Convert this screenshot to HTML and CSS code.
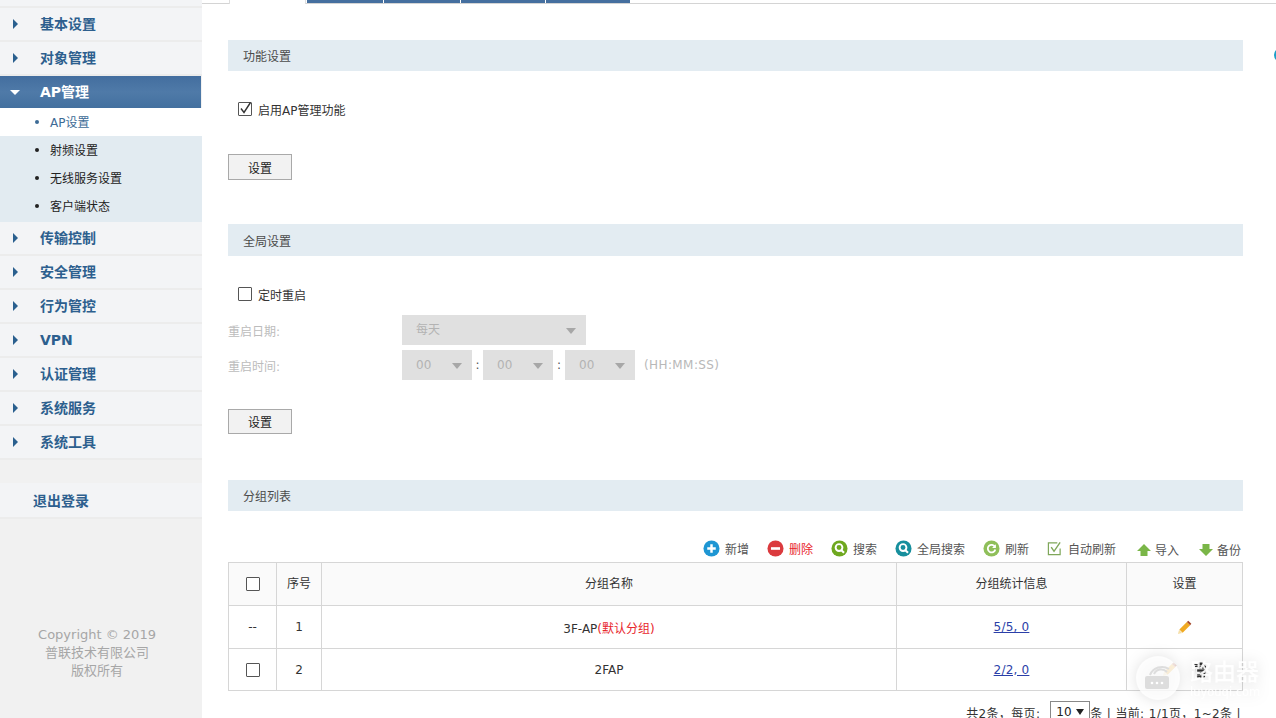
FILE: index.html
```html
<!DOCTYPE html>
<html lang="zh">
<head>
<meta charset="utf-8">
<title>AP设置</title>
<link rel="stylesheet" href="styles.css">
</head>
<body>
<div class="page">
  <aside class="sidebar">
    <nav class="menu">
      <div class="menu-stub"></div>
      <a class="menu-item"><i class="arrow"></i><span>基本设置</span></a>
      <a class="menu-item"><i class="arrow"></i><span>对象管理</span></a>
      <a class="menu-item open"><i class="arrow-down"></i><span>AP管理</span></a>
      <ul class="submenu">
        <li class="current">AP设置</li>
        <li>射频设置</li>
        <li>无线服务设置</li>
        <li class="last">客户端状态</li>
      </ul>
      <a class="menu-item"><i class="arrow"></i><span>传输控制</span></a>
      <a class="menu-item"><i class="arrow"></i><span>安全管理</span></a>
      <a class="menu-item"><i class="arrow"></i><span>行为管控</span></a>
      <a class="menu-item"><i class="arrow"></i><span class="latin">VPN</span></a>
      <a class="menu-item"><i class="arrow"></i><span>认证管理</span></a>
      <a class="menu-item"><i class="arrow"></i><span>系统服务</span></a>
      <a class="menu-item"><i class="arrow"></i><span>系统工具</span></a>
    </nav>
    <a class="logout">退出登录</a>
    <footer class="copyright">
      <div>Copyright © 2019</div>
      <div>普联技术有限公司</div>
      <div>版权所有</div>
    </footer>
  </aside>

  <main class="main">
    <div class="tabs">
      <div class="tab active"></div>
      <div class="tab w76"></div>
      <div class="tab w76"></div>
      <div class="tab w84"></div>
      <div class="tab w84"></div>
    </div>

    <div class="content">
      <section class="section s-func">
        <h2 class="bar">功能设置</h2>
        <label class="check-row"><span class="box checked"><svg viewBox="0 0 14 14" width="14" height="14"><path d="M3 6.500 6 10.500 12.500 0.500" fill="none" stroke="#333" stroke-width="1.400"/></svg></span>启用AP管理功能</label>
        <button class="btn">设置</button>
      </section>

      <section class="section s-global">
        <h2 class="bar">全局设置</h2>
        <label class="check-row"><span class="box"></span>定时重启</label>
        <div class="field first">
          <span class="field-label">重启日期:</span>
          <span class="select wide"><span class="select-cjk">每天</span><i class="caret"></i></span>
        </div>
        <div class="field">
          <span class="field-label">重启时间:</span>
          <span class="select narrow">00<i class="caret"></i></span>
          <b class="colon">:</b>
          <span class="select narrow">00<i class="caret"></i></span>
          <b class="colon wider">:</b>
          <span class="select narrow">00<i class="caret"></i></span>
          <span class="hint">(HH:MM:SS)</span>
        </div>
        <button class="btn">设置</button>
      </section>

      <section class="section s-list">
        <h2 class="bar">分组列表</h2>
        <div class="toolbar">
          <a class="tool t-new"><svg viewBox="0 0 18 18" width="17" height="17"><circle cx="9" cy="9" r="8.500" fill="#1e96d3"/><path d="M9 4.500v9M4.500 9h9" stroke="#fff" stroke-width="2.600"/></svg>新增</a>
          <a class="tool t-del"><svg viewBox="0 0 18 18" width="17" height="17"><circle cx="9" cy="9" r="8.500" fill="#db3a3e"/><path d="M4.200 9h9.600" stroke="#fff" stroke-width="2.800"/></svg><span class="red">删除</span></a>
          <a class="tool t-search"><svg viewBox="0 0 18 18" width="17" height="17"><circle cx="9" cy="9" r="8.500" fill="#6fa81f"/><circle cx="8.500" cy="8" r="3.600" fill="none" stroke="#fff" stroke-width="2"/><path d="M11 10.800 13.800 13.600" stroke="#fff" stroke-width="2.200"/></svg>搜索</a>
          <a class="tool t-global"><svg viewBox="0 0 18 18" width="17" height="17"><circle cx="9" cy="9" r="8.500" fill="#178f9d"/><circle cx="8.500" cy="8" r="3.600" fill="none" stroke="#fff" stroke-width="2"/><path d="M11 10.800 13.800 13.600" stroke="#fff" stroke-width="2.200"/></svg>全局搜索</a>
          <a class="tool t-refresh"><svg viewBox="0 0 18 18" width="17" height="17"><circle cx="9" cy="9" r="8.500" fill="#8fbf5a"/><path d="M12.600 7.200A4 4 0 1 0 13 10" fill="none" stroke="#fff" stroke-width="1.900"/><path d="M13.600 4.400v4h-4z" fill="#fff"/></svg>刷新</a>
          <a class="tool t-auto"><svg viewBox="0 0 16 16" width="15" height="15"><path d="M14 8v6.500H1.500V2H11" fill="none" stroke="#7fa75a" stroke-width="1.300"/><path d="M4.500 6.500 7.500 11 14 1.500" fill="none" stroke="#7fa75a" stroke-width="1.500"/></svg>自动刷新</a>
          <a class="tool t-import"><svg viewBox="0 0 14 14" width="14" height="14"><path d="M7 1 14 8H10.500V13H3.500V8H0z" fill="#7ab648"/></svg>导入</a>
          <a class="tool t-backup"><svg viewBox="0 0 14 14" width="14" height="14"><path d="M7 13 14 6H10.500V1H3.500V6H0z" fill="#7ab648"/></svg>备份</a>
        </div>
        <table class="grid">
          <colgroup>
            <col class="c1"><col class="c2"><col class="c3"><col class="c4"><col class="c5">
          </colgroup>
          <thead>
            <tr><th><span class="box"></span></th><th>序号</th><th>分组名称</th><th>分组统计信息</th><th>设置</th></tr>
          </thead>
          <tbody>
            <tr>
              <td>--</td><td>1</td><td>3F-AP<span class="red">(默认分组)</span></td><td><a class="link">5/5, 0</a></td>
              <td><svg class="pencil" viewBox="0 0 16 16" width="15" height="15"><use href="#pencil"/></svg></td>
            </tr>
            <tr class="short">
              <td><span class="box"></span></td><td>2</td><td>2FAP</td><td><a class="link">2/2, 0</a></td>
              <td class="action-pair"><svg class="pencil" viewBox="0 0 16 16" width="15" height="15"><use href="#pencil"/></svg><svg class="trash" viewBox="0 0 12 16" width="13" height="16"><path d="M1 4h10l-1 11H2zM0 2.500h12M4 2.500V1h4v1.500" fill="#333" stroke="#333"/><path d="M2 7h8M2 10h8M2 13h8" stroke="#bbb"/></svg></td>
            </tr>
          </tbody>
        </table>
        <div class="pager">共2条，每页:<span class="page-size">10<i class="caret dark"></i></span>条 | 当前: 1/1页，1~2条 |</div>
      </section>
    </div>
  </main>
</div>

<div class="edge-dot"></div>

<div class="watermark">
  <svg class="wm-logo" viewBox="0 0 44 44" width="44" height="44">
    <circle cx="22" cy="22" r="22" fill="#fff" fill-opacity=".82"/>
    <path d="M18 18a8 8 0 0 1 13 -2M14 19a13 13 0 0 1 19 -6" fill="none" stroke="#ddd" stroke-width="2"/>
    <rect x="9" y="20" width="24" height="13" rx="2" fill="#ddd"/>
    <circle cx="16" cy="27" r="1.300" fill="#fff"/><circle cx="21" cy="27" r="1.300" fill="#fff"/><circle cx="26" cy="27" r="1.300" fill="#fff"/>
  </svg>
  <div class="wm-text"><div class="wm-cn">路由器</div><div class="wm-en">luyouqi.com</div></div>
</div>

<svg class="defs" width="0" height="0">
  <defs>
    <g id="pencil">
      <path d="M1 15 2.200 10.500 5.500 13.800z" fill="#f6dfa8"/>
      <path d="M2.500 10 10.500 2 14 5.500 6 13.500z" fill="#f0aa23"/>
      <path d="M10.500 2 12 .8 15.300 4 14 5.500z" fill="#a5482c"/>
    </g>
  </defs>
</svg>
</body>
</html>
```
FILE: styles.css
```css
* { box-sizing: border-box; }
html, body { margin: 0; padding: 0; height: 718px; overflow: hidden; background: #fff; }
body {
  position: relative;
  font-family: "DejaVu Sans", "Noto Sans CJK SC", sans-serif;
  font-size: 12px;
  color: #333;
}
ul { list-style: none; margin: 0; padding: 0; }
h2 { margin: 0; font-weight: 400; }
.page { display: flex; height: 718px; }

/* Sidebar */
.sidebar { width: 202px; flex: none; background: #f1f1f1; display: flex; flex-direction: column; }
.menu-stub { height: 8px; border-bottom: 2px solid #ececec; background: #f3f4f6; }
.menu-item {
  height: 34px; display: flex; align-items: center; padding-left: 13px;
  background: #f3f4f6; border-bottom: 2px solid #ececec;
  color: #2d5f8e; font-size: 14px; font-weight: 700; width: 202px;
}
.menu-item span { margin-left: 22px; margin-bottom: 2px; }
.menu-item span.latin { margin-bottom: 0; }
.arrow { width: 0; height: 0; border-left: 5px solid #2a5f8e; border-top: 5px solid transparent; border-bottom: 5px solid transparent; }
.menu-item.open {
  height: 32px; background: linear-gradient(#436e9f, #4f7aa8 50%, #43709f); border-bottom: 0; color: #fff; padding-left: 10px;
  width: 201px;
}
.menu-item.open span { margin-left: 20px; }
.arrow-down { width: 0; height: 0; border-top: 5px solid #fff; border-left: 5px solid transparent; border-right: 5px solid transparent; }
.submenu { background: #e2ebf1; width: 202px; }
.submenu li { height: 28px; line-height: 30px; padding-left: 50px; position: relative; color: #222; }
.submenu li.last { height: 30px; }
.submenu li::before { content: ""; position: absolute; left: 35px; top: 12px; width: 4px; height: 4px; border-radius: 50%; background: #222; }
.submenu li.current { background: #fff; color: #3d6b96; height: 28px; }
.submenu li.current::before { background: #3d6b96; }
.logout {
  display: block; width: 202px; height: 36px; margin-top: 23px; padding-left: 33px; line-height: 36px;
  background: #f3f4f6; border-bottom: 2px solid #ececec; color: #2d5f8e; font-size: 14px; font-weight: 700;
}
.copyright { margin-top: 107px; width: 202px; text-align: center; color: #a6a6a6; font-size: 13px; line-height: 18px; padding-right: 8px; }

/* Tabs */
.main { flex: 1; min-width: 0; }
.tabs { display: flex; height: 4px; border-bottom: 1px solid #d4d4d4; padding-left: 27px; gap: 1px; }
.tab { height: 3px; background: #456f9f; }
.tab.active { width: 77px; height: 4px; background: #fff; border-left: 1px solid #ddd; border-right: 1px solid #ddd; }
.w76 { width: 76px; }
.w84 { width: 84px; }

/* Content */
.content { padding: 36px 33px 0 26px; }
.section { display: block; }
.bar { height: 31px; line-height: 35px; padding-left: 15px; background: #e3ecf2; font-size: 12px; color: #4b4b4b; }
.check-row { display: flex; align-items: center; height: 20px; margin: 28px 0 0 10px; color: #333; }
.box { display: inline-block; width: 14px; height: 14px; border: 1.500px solid #555; border-radius: 1px; background: #fff; margin-right: 6px; vertical-align: middle; position: relative; }
.box svg { position: absolute; left: -1.500px; top: -1.500px; overflow: visible; }
.btn {
  display: block; width: 64px; height: 26px; padding: 0; background: #f2f2f2; border: 1px solid #a9a9a9;
  font: inherit; color: #222; border-radius: 0;
}
.s-func .btn { margin-top: 35px; }
.s-global { margin-top: 44px; }
.s-global .bar { height: 32px; line-height: 36px; }
.s-global .check-row { margin-top: 28px; }
.field { display: flex; align-items: center; height: 30px; margin-top: 5px; }
.field.first { margin-top: 11px; }
.field-label { width: 174px; color: #bcbcbc; }
.select { display: flex; align-items: center; height: 30px; background: #e0e0e0; color: #b3b3b3; padding-left: 14px; position: relative; }
.select-cjk { margin-bottom: 3px; }
.wide { width: 184px; }
.narrow { width: 70px; }
.caret { position: absolute; right: 10px; top: 13px; width: 0; height: 0; border-top: 6px solid #a7a7a7; border-left: 5px solid transparent; border-right: 5px solid transparent; }
.colon { width: 11px; text-align: center; color: #555; font-weight: 400; }
.colon.wider { width: 12px; }
.hint { margin-left: 9px; color: #b8b8b8; letter-spacing: .4px; }
.s-global .btn { margin-top: 29px; width: 64px; height: 25px; }
.s-list { margin-top: 46px; }
.toolbar { display: flex; justify-content: flex-end; align-items: center; height: 24px; margin-top: 25px; margin-bottom: 2px; padding-right: 2px; color: #555; }
.tool { display: flex; align-items: center; gap: 5px; font-size: 12px; margin-left: 18px; }
.t-auto { margin-left: 18px; gap: 6px; }
.t-import { margin-left: 21px; gap: 4px; margin-top: 3px; }
.t-backup { margin-left: 20px; gap: 4px; margin-top: 3px; }
.red { color: #e8262c; }

/* Table */
.grid { width: 1014px; border-collapse: collapse; table-layout: fixed; }
.c1 { width: 48px; } .c2 { width: 45px; } .c3 { width: 575px; } .c4 { width: 230px; } .c5 { width: 116px; }
.grid th, .grid td { border: 1px solid #d6d6d6; text-align: center; height: 43px; padding: 0; font-weight: 400; color: #333; }
.grid th { background: #fafafa; height: 43px; padding-bottom: 4px; }
.grid th:first-child { padding-bottom: 0; }
.grid tr.short td { height: 42px; }
.grid .box { margin: 0; }
.grid .red { color: #e8262c; }
.link { color: #2b3fa8; text-decoration: underline; letter-spacing: .2px; }
.pencil { vertical-align: middle; }
.action-pair { white-space: nowrap; }
.trash { vertical-align: middle; margin-left: 17px; }
.pager { display: flex; justify-content: flex-end; align-items: center; height: 30px; margin-top: 6px; padding-right: 2px; white-space: pre; letter-spacing: .35px; }
.page-size { display: inline-block; position: relative; width: 40px; height: 24px; line-height: 20px; padding-left: 5px; border: 1px solid #888; margin: 2px 0 0 10px; color: #222; background: #fff; letter-spacing: 0; }
.caret.dark { border-top-color: #222; right: 5px; top: 7px; border-left-width: 4px; border-right-width: 4px; }

/* Overlays */
.edge-dot { position: absolute; left: 1274px; top: 48px; width: 14px; height: 14px; border-radius: 50%; background: #1a9ec9; }
.watermark { position: absolute; left: 1136px; top: 656px; display: flex; align-items: flex-start; gap: 10px; color: #fff; pointer-events: none; filter: drop-shadow(0 0 7px rgba(0, 0, 0, .14)); }
.wm-text { opacity: .92; margin-top: 1px; }
.wm-cn { font-size: 23px; line-height: 27px; font-family: "Noto Sans CJK SC", sans-serif; font-weight: 500; }
.wm-en { font-size: 11.500px; line-height: 13px; margin-top: 2px; font-family: "DejaVu Sans", sans-serif; }
.defs { position: absolute; }
```
